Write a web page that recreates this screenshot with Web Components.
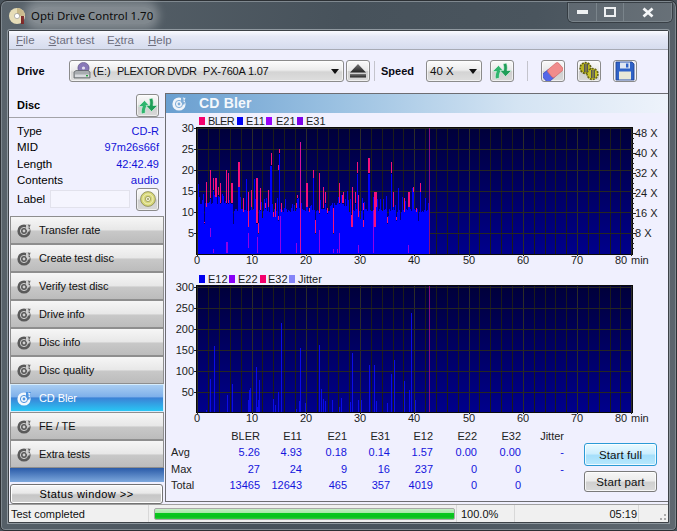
<!DOCTYPE html>
<html><head><meta charset="utf-8"><style>
html,body{margin:0;padding:0;background:#48525a;width:677px;height:531px;overflow:hidden}
body{font:11px "Liberation Sans",Arial,sans-serif;color:#000}
</style></head><body>
<odc-window>
  <odc-titlebar slot="title">Opti Drive Control 1.70</odc-titlebar>
  <odc-menubar slot="client"></odc-menubar>
  <odc-toolbar slot="client"></odc-toolbar>
  <odc-main slot="client">
    <odc-sidebar slot="side"></odc-sidebar>
    <odc-content slot="content"></odc-content>
  </odc-main>
  <odc-statusbar slot="client"></odc-statusbar>
</odc-window>
<script>
const FONT='"Liberation Sans",Arial,sans-serif';
const ICONS={
 refresh:`<svg width="20" height="18" viewBox="0 0 20 18"><path d="M3.500 17C3 14 3.500 11.500 4.500 9.500H.5L6.500 3.500 12 9.500H8.500C7.500 11.500 7 14 7.500 16z" fill="#2fb56e" stroke="#e8f8ee" stroke-width=".6"/><path d="M14.500 1C15.500 4 15.500 6.500 15 8.500H19.500L13.500 14.500 8 8.500H11.500C12 6.500 12 4 11 2z" fill="#1f9e58" stroke="#e8f8ee" stroke-width=".6"/></svg>`,
 eject:`<svg width="18" height="14" viewBox="0 0 18 14"><defs><linearGradient id="ej" x1="0" y1="0" x2="0" y2="1"><stop offset="0" stop-color="#777"/><stop offset="1" stop-color="#222"/></linearGradient></defs><path d="M9 0l8 8.500H1z" fill="url(#ej)"/><rect x="1" y="10" width="16" height="3.500" fill="url(#ej)"/></svg>`,
 eraser:`<svg width="20" height="19" viewBox="0 0 20 19"><g transform="rotate(-40 10 10)"><rect x="-1" y="5" width="10" height="10" rx="2" fill="#5468e8" stroke="#3040b8" stroke-width=".6"/><rect x="6" y="5" width="14" height="10" rx="2" fill="#f08c8c" stroke="#d06060" stroke-width=".6"/></g></svg>`,
 gears:`<svg width="22" height="20" viewBox="0 0 22 20"><circle cx="7.500" cy="7" r="5.400" fill="#b8b420" stroke="#5c5a10" stroke-width="1.600" stroke-dasharray="2 1"/><circle cx="14.500" cy="13" r="5.400" fill="#c8c428" stroke="#6a6812" stroke-width="1.600" stroke-dasharray="2 1"/><rect x="6" y="3" width="1.600" height="8" fill="#555"/><rect x="8.400" y="3" width="1.600" height="8" fill="#555"/><rect x="13" y="9" width="1.600" height="8" fill="#555"/><rect x="15.400" y="9" width="1.600" height="8" fill="#555"/></svg>`,
 floppy:`<svg width="20" height="20" viewBox="0 0 20 20"><path d="M1 1h16l2 2v16H1z" fill="#2f62c8" stroke="#1c3f90" stroke-width=".8"/><rect x="5" y="1.500" width="10" height="6" fill="#dfe6f2"/><rect x="11" y="2.500" width="2.400" height="4" fill="#2f62c8"/><rect x="4" y="10.500" width="12" height="8" fill="#e8e8d8"/></svg>`,
 disc:`<svg width="16" height="16" viewBox="0 0 16 16"><circle cx="8" cy="8" r="7.400" fill="#d8d878" stroke="#77774a" stroke-width=".7"/><circle cx="8" cy="8" r="5" fill="none" stroke="#eeeebc" stroke-width="1"/><circle cx="8" cy="8" r="2.600" fill="#f4f4d4" stroke="#88884e" stroke-width=".7"/><circle cx="8" cy="8" r="1" fill="#999966"/></svg>`,
 drive:`<svg width="18" height="18" viewBox="0 0 18 18"><circle cx="10.500" cy="6" r="5.600" fill="#8878b8" stroke="#54487c" stroke-width=".6"/><circle cx="10.500" cy="6" r="1.600" fill="#e4e0f0"/><path d="M1 10l2-1.500h12l2 1.500v6H1z" fill="#a8acb0" stroke="#55595d" stroke-width=".7"/><rect x="2" y="12.500" width="14" height="2.500" fill="#d8dade"/><rect x="13" y="13" width="2" height="1.400" fill="#28a040"/></svg>`,
 app:`<svg width="16" height="18" viewBox="0 0 16 18"><circle cx="8" cy="9" r="8" fill="#e6ddb8"/><path d="M8 1a8 8 0 0 1 8 8H8z" fill="#c8b888"/><circle cx="8" cy="9" r="2.600" fill="#fff" stroke="#888" stroke-width=".6"/><rect x="12" y="9" width="3" height="8" fill="#7a2020"/></svg>`
};
function navIcon(c,h){return `<svg width="15" height="15" viewBox="0 0 15 15"><circle cx="7" cy="8" r="6.600" fill="${c}"/><circle cx="7" cy="8" r="3.600" fill="none" stroke="${h}" stroke-width="1"/><circle cx="7" cy="8" r="1.400" fill="${h}"/><path d="M9 1l5 0-1 3-2 1 2 1.500-1 2.500-3-3z" fill="${h}"/><path d="M11 1.500l2.500 1-1.500 2z" fill="${c}"/></svg>`}
function def(name,fn){customElements.define(name,class extends HTMLElement{constructor(){super();this.attachShadow({mode:'open'});}connectedCallback(){if(!this._d){this._d=1;this.shadowRoot.innerHTML=fn(this);}}});}

def('odc-window',()=>`<style>
:host{display:block;width:677px;height:531px;box-sizing:border-box}
.w{box-sizing:border-box;width:677px;height:531px;padding:0 7px 7px;border:1px solid #2c3034;border-radius:7px 7px 5px 5px;
 margin:0;display:flex;flex-direction:column;box-shadow:inset 0 0 0 1px #7f888f;
 background:linear-gradient(100deg,#5a646c 0,#47525b 45%,#4a555e 70%,#5f6870 100%)}
.c{flex:none;height:493px;display:flex;flex-direction:column;border:1px solid #3d4247;border-radius:2px 2px 0 0;box-sizing:border-box;background:#f0f0fe;box-shadow:0 0 0 1px #8f989f}
</style><div class="w"><slot name="title"></slot><div class="c"><slot name="client"></slot></div></div>`);

def('odc-titlebar',()=>`<style>
:host{display:flex;height:29px;align-items:flex-start;flex:none}
.ico{margin:6px 0 0 1px;width:16px;height:18px}
.t{margin:6px 0 0 6px;font:11.4px "Noto Sans","Liberation Sans",sans-serif;line-height:17px;color:#0c0c0c;background:rgba(255,255,255,.27);border-radius:8px;box-shadow:0 0 9px 6px rgba(255,255,255,.27)}
.b{margin-left:auto;margin-right:-3px;margin-top:2px;display:flex;height:18px;border:1px solid #7a848b;border-top:none;border-radius:0 0 5px 5px;background:rgba(255,255,255,.1);box-shadow:0 0 0 1px rgba(30,34,38,.5)}
.b div{display:flex;align-items:center;justify-content:center;border-left:1px solid #7a848b}
.b div:first-child{border-left:none}
</style><div class="ico">${ICONS.app}</div><div class="t"><slot></slot></div>
<div class="b"><div style="width:27px"><svg width="11" height="5"><rect y="0" width="11" height="4" fill="#eef0f2"/></svg></div>
<div style="width:26px"><svg width="12" height="10"><rect x="1" y="1" width="10" height="8" fill="none" stroke="#eef0f2" stroke-width="2"/></svg></div>
<div style="width:47px"><svg width="12" height="11"><path d="M1.500 1.500l9 8M10.500 1.500l-9 8" stroke="#f4f6f8" stroke-width="2.800"/></svg></div></div>`);

def('odc-menubar',()=>`<style>
:host{display:flex;flex:none;height:18px;box-sizing:content-box;padding-left:7px;gap:14px;align-items:center;color:#6e6f7e;font:11.5px ${FONT};
 background:linear-gradient(#fafbff 0,#e6e9f6 30%,#d6dcee 100%);border-bottom:1px solid #a7aab4}
u{text-decoration:underline}
span:nth-child(3){margin-right:-1.5px}
</style><span><u>F</u>ile</span><span><u>S</u>tart test</span><span>E<u>x</u>tra</span><span><u>H</u>elp</span>`);

def('odc-tool',(h)=>`<style>
:host{display:flex;align-items:center;justify-content:center;box-sizing:border-box;width:${h.getAttribute('w')||24}px;height:${h.getAttribute('h')||22}px;border:1px solid #8b8b8b;border-radius:3px;background:linear-gradient(#fafafa,#e8e8e8 48%,#cfcfcf 52%,#d8d8d8);flex:none;box-shadow:inset 0 0 0 1px rgba(255,255,255,.6)}
</style><slot></slot>`);

def('odc-combo',(h)=>`<style>
:host{display:flex;align-items:center;box-sizing:border-box;height:22px;border:1px solid #8b8b8b;border-radius:3px;background:linear-gradient(#fcfcfc,#ececec 45%,#d4d4d4 55%,#dedede);flex:none;font:11.5px ${FONT};color:#111;box-shadow:inset 0 0 0 1px rgba(255,255,255,.6);padding-left:3px}
.a{margin-left:auto;margin-right:4px;width:0;height:0;border:4.5px solid transparent;border-top:5px solid #111;border-bottom:none}
</style><slot></slot><span class="a"></span>`);

def('odc-toolbar',()=>`<style>
:host{display:flex;flex:none;height:42px;align-items:center;padding-left:8px;box-sizing:border-box;background:#f0f0fe}
b{font:bold 11px ${FONT};color:#0a0a14}
.s{width:1px;height:20px;background:#c4c4cc;flex:none}
.d{display:flex;align-items:center;font-size:11px}
.d svg{margin-right:2px}
</style>
<b style="width:52px">Drive</b>
<odc-combo style="width:275px"><span class="d">${ICONS.drive}<span style="width:24px">(E:)</span><span style="width:86px;letter-spacing:-.5px">PLEXTOR DVDR</span><span style="letter-spacing:-.2px">PX-760A 1.07</span></span></odc-combo>
<odc-tool style="margin-left:2px">${ICONS.eject}</odc-tool>
<span class="s" style="margin-left:4px"></span>
<b style="margin-left:6px;width:45px">Speed</b>
<odc-combo style="width:56px;padding-left:3px">40 X</odc-combo>
<odc-tool style="margin-left:8px">${ICONS.refresh}</odc-tool>
<span class="s" style="margin-left:13px"></span>
<odc-tool style="margin-left:13px">${ICONS.eraser}</odc-tool>
<odc-tool style="margin-left:12px">${ICONS.gears}</odc-tool>
<odc-tool style="margin-left:12px;background:#e6e6f0">${ICONS.floppy}</odc-tool>`);

def('odc-main',()=>`<style>:host{display:flex;flex:none;height:412px}
.s{width:155px;flex:none;display:flex}.c{flex:1;display:flex;margin-left:1px;min-width:0}</style>
<div class="s"><slot name="side"></slot></div><div class="c"><slot name="content"></slot></div>`);

def('odc-nav',(h)=>{const a=h.hasAttribute('active');return `<style>
:host{display:flex;align-items:center;box-sizing:border-box;height:28px;flex:none;border:1px solid ${a?'#d6ecfb':'#8e8e8e'};font:11px ${FONT};letter-spacing:-.1px;
 color:${a?'#fff':'#111'};padding-left:6px;
 background:${a?'linear-gradient(#a9cdf2 0,#7eb0ea 45%,#3b82d6 50%,#29c6f4 100%)':'linear-gradient(#f6f6f6 0,#e8e8e8 48%,#c8c8c8 55%,#bcbcbc 100%)'}}
.i{width:15px;height:15px;margin-right:7px;display:block;flex:none}
</style><span class="i">${a?navIcon('#f4f8fc','#4f94e0'):navIcon('#5a5a5a','#cfcfcf')}</span><slot></slot>`});

def('odc-sidebar',()=>`<style>
:host{display:flex;flex-direction:column;width:155px;height:412px;font:11.5px ${FONT}}
.hd{display:flex;height:26px;box-sizing:border-box;align-items:flex-start;padding:2px 5px 0 8px;border-bottom:1px solid #a3a3a8;flex:none}
.hd b{font:bold 11px ${FONT};margin-top:5px;flex:1}
.rows{display:grid;grid-template-columns:auto 1fr;grid-auto-rows:16.3px;padding:5px 5px 0 8px;align-items:center;flex:none;box-sizing:border-box;height:70px}
.rows span:nth-child(even){text-align:right;color:#1212d8;font-size:11px}
.lab{display:flex;align-items:center;padding:0 5px 0 8px;height:24px;flex:none;box-sizing:border-box;margin-top:-1px}
.in{width:80px;height:18px;box-sizing:border-box;border:1px solid #e2e2ec;background:#f5f5fe;margin:0 6px 0 auto}
.nav{display:flex;flex-direction:column;width:154px;margin-left:1px;flex:none}
.fill{height:14px;flex:none;background:linear-gradient(#2a5ba8,#7da8dc);margin-left:1px}
.st{margin:2px 1px 0 1px;height:20px;box-sizing:border-box;border:1px solid #737373;border-radius:3px;background:linear-gradient(#f8f8f8,#e8e8e8 45%,#c6c6c6 55%,#d0d0d0);text-align:center;font:11px/18px ${FONT};letter-spacing:.45px;box-shadow:inset 0 0 0 1px #fff;flex:none}
.top{height:124px;flex:none;background:#f0f0fe}
</style>
<div class="top"><div class="hd"><b>Disc</b><odc-tool w="23" h="23">${ICONS.refresh}</odc-tool></div>
<div class="rows"><span>Type</span><span>CD-R</span><span>MID</span><span>97m26s66f</span><span>Length</span><span>42:42.49</span><span>Contents</span><span style="font-size:11.5px">audio</span></div>
<div class="lab"><span>Label</span><span class="in"></span><odc-tool w="23" h="23">${ICONS.disc}</odc-tool></div></div>
<div class="nav"><odc-nav>Transfer rate</odc-nav><odc-nav>Create test disc</odc-nav><odc-nav>Verify test disc</odc-nav><odc-nav>Drive info</odc-nav><odc-nav>Disc info</odc-nav><odc-nav>Disc quality</odc-nav><odc-nav active>CD Bler</odc-nav><odc-nav>FE / TE</odc-nav><odc-nav>Extra tests</odc-nav></div>
<div class="fill"></div><div class="st">Status window &gt;&gt;</div>`);

function rng(seed){return()=>{seed=(seed*1664525+1013904223)>>>0;return seed/4294967296}}
function chart1(){
 const Y0=254,U=4.2;let s='';
 const r=rng(777);const h=[];
 for(let x=198;x<429;x++){
  const high=(x<233)||(x>=330&&x<347);
  const b=high?11.5:10;
  const q=r();
  let v=q<.05?7+r()*2:q<.72?b+r()*.8:b+.8+r()*3;
  h[x]=v;
 }
 const P=[];
 [[42,335,340],[48,215,290],[61,180,265],[68,205,240],[75,205,260,2],[85,230,255],[90,220,280],[108,180,280],[115,190,280],[122,220,280,2],[145,155,230,2],[160,265,305],[175,245,350],[182,240,290],[198,205,340,2],[205,340,370],[210,235,300],[225,280,295],[235,240,290],[242,130,165],[248,305,320],[255,280,320],[265,165,180],[272,280,305],[264,318,330],[268,118,130],[322,255,265],[318,280,295],[348,220,290,2],[358,295,305],[370,180,205],[386,205,300]].forEach(p=>P.push([190+p[0]/3,p[3]||1,p[1],p[2]]));
 [[10,180,205],[28,190,310],[16,330,370],[40,232,295],[44,245,280],[52,295,310],[68,295,370],[88,218,280],[95,255,280],[100,245,280],[122,315,350,2],[127,230,340],[136,245,280],[142,155,190],[145,255,320],[160,280,300],[158,330,350],[175,145,190,2],[193,245,350,2],[199,245,290],[232,320,340],[243,155,190],[250,245,290],[258,320,330],[282,265,305],[295,245,290,2],[310,232,245],[317,295,305],[331,220,245]].forEach(p=>P.push([310+p[0]/3,p[3]||1,p[1],p[2]]));
 P.forEach(p=>{const x=Math.round(p[0]);for(let k=0;k<p[1];k++){const bv=(430-p[3])/12.6;h[x+k]=Math.max(bv,1);}});
 [[25,220],[40,250],[88,258],[100,255],[168,205],[192,205],[240,165],[268,130],[370,180]].forEach(p=>{const x=Math.round(190+p[0]/3);h[x]=Math.max(h[x]||0,(430-p[1])/12.6)});
 [[10,205],[142,190],[175,190],[243,190],[265,232],[305,232],[331,245],[110,240],[210,265],[228,255]].forEach(p=>{const x=Math.round(310+p[0]/3);h[x]=Math.max(h[x]||0,(430-p[1])/12.6)});
 for(let x=198;x<429;x++){s+=`<rect x="${x}" y="${Y0-h[x]*U}" width="1" height="${h[x]*U}" fill="#0000ff"/>`;}
 P.forEach(p=>{const x=Math.round(p[0]),y=110+p[2]/3,b=110+p[3]/3;s+=`<rect x="${x}" y="${y}" width="${p[1]}" height="${b-y}" fill="#f4107c"/>`;});
 const V=[[190+61/3,355,380],[190+68/3,418,430],[190+108/3,395,430,2],[190+175/3,370,415],[190+200/3,380,430],[190+270/3,318,430],[190+318/3,398,430],[190+331/3,95,430],[310+28/3,360,430],[310+70/3,418,430],[310+82/3,418,430],[310+88/3,370,430],[310+145/3,405,430],[310+190/3,300,430],[310+295/3,405,430]];
 V.forEach(p=>{const x=Math.round(p[0]),y=110+p[1]/3,b=110+p[2]/3;const isTall=Math.abs(p[0]-(190+331/3))<1;s+=`<rect x="${x}" y="${y}" width="${p[3]||1}" height="${b-y}" fill="${isTall?'#d8109c':'#9000e8'}"/>`;});
 return s;
}
function chart2(){
 let s='';const Y=411;
 [[124,420],[136,328],[148,228],[187,375],[200,370],[202,342],[248,390],[251,360],[255,355],[274,292],[277,410],[283,330],[280,390],[325,388],[331,405],[340,365],[347,285],[349,160],[394,418],[403,393],[406,235],[421,400],[463,225],[469,358],[475,388],[481,393],[502,390],[523,412],[529,384],[556,395],[562,250],[580,390],[589,390],[613,285],[627,378],[628,285],[634,393],[667,400],[679,312],[688,270],[718,333],[733,360],[739,130],[750,390]].forEach(p=>{
  const x=Math.round(165+p[0]/3),y=270+p[1]/3;s+=`<rect x="${x}" y="${y}" width="1" height="${Y-y+1}" fill="#0c0ce8"/>`});
 return s;
}
def('odc-chart',(h)=>{
 const two=h.getAttribute('kind')==='2';
 const T=two?286:128,B=two?412:254,L=197,R=632,top=two?270:113,hh=two?158:157;
 let g='',t='';
 for(let i=0;i<=40;i++){const xx=Math.round(L+.3+i*10.85);
   g+=`<rect x="${xx}" y="${T}" width="1" height="${B-T}" fill="${i%5==0?'#2c2c28':'#1c1c1a'}"/>`;
   if(i%5==0){t+=`<text x="${i==40?621:xx}" y="${two?422:264}" text-anchor="middle">${i*2}</text><rect x="${xx}" y="${B}" width="1" height="2" fill="#222"/>`;}}
 t+=`<text x="631" y="${two?422:264}">min</text>`;
 const ys=two?[300,250,200,150,100,50]:[30,25,20,15,10,5];
 ys.forEach(v=>{const y=two?Math.round(412.6-v*.4176):Math.round(254.3-v*4.2);
   g+=`<rect x="${L}" y="${y}" width="${R-L}" height="1" fill="#262622"/><rect x="${L-3}" y="${y}" width="3" height="1" fill="#222"/>`;
   t+=`<text x="194" y="${y+4}" text-anchor="end">${v}</text>`;});
 if(!two)['48 X','40 X','32 X','24 X','16 X','8 X'].forEach((l,i)=>{const y=133+i*20;t+=`<rect x="${R}" y="${y}" width="4" height="1" fill="#222"/><text x="635" y="${y+4}">${l}</text>`;for(let k=1;k<4;k++)t+=`<rect x="${R}" y="${y+k*5}" width="2" height="1" fill="#222"/>`;});
 const leg=two?[[199,'#0000f0',208,'E12'],[229,'#8800f8',238,'E22'],[260,'#f4006c',268,'E32'],[289,'#8484f8',298,'Jitter']]:[[199,'#f4006c',208,'BLER'],[237,'#0000f0',246,'E11'],[266,'#9800f8',276,'E21'],[297,'#7a00e8',306,'E31']];
 const ly=two?275:117;
 leg.forEach(l=>{t+=`<rect x="${l[0]}" y="${ly}" width="6" height="8" fill="${l[1]}"/><text x="${l[2]}" y="${ly+8}"${l[3]=='BLER'?' letter-spacing="-.7"':''}>${l[3]}</text>`;});
 const id=two?'b':'a';
 return `<style>:host{display:block;height:${hh}px;flex:none}svg{display:block}text{font:11px ${FONT};fill:#1c1c1c}rect{shape-rendering:crispEdges}</style>
 <svg width="500" height="${hh}" viewBox="166 ${top} 500 ${hh}"><defs><linearGradient id="${id}" x1="0" y1="0" x2="0" y2="1"><stop offset="0" stop-color="#00003a"/><stop offset="1" stop-color="#00008c"/></linearGradient></defs>
 <rect x="${L}" y="${T}" width="${R-L}" height="${B-T}" fill="url(#${id})"/>${g}${two?chart2():chart1()}
 <rect x="429" y="${T}" width="1" height="${B-T}" fill="#84107c"/>
 <rect x="${L-1}" y="${T-1}" width="${R-L+2}" height="1" fill="#0a0a0a"/><rect x="${L-1}" y="${T}" width="1" height="${B-T+1}" fill="#0a0a0a"/><rect x="${R}" y="${T}" width="1" height="${B-T+1}" fill="#0a0a0a"/><rect x="${L-1}" y="${B}" width="${R-L+2}" height="1" fill="#0a0a0a"/>${t}</svg>`});

def('odc-stats',()=>{
 const rows=[['','BLER','E11','E21','E31','E12','E22','E32','Jitter'],['Avg','5.26','4.93','0.18','0.14','1.57','0.00','0.00','-'],['Max','27','24','9','16','237','0','0','-'],['Total','13465','12643','465','357','4019','0','0','']];
 let c='';rows.forEach((r,i)=>r.forEach((v,j)=>{c+=`<span class="${i==0||j==0?'h':'v'}${j==0?' l':''}">${v}</span>`}));
 return `<style>:host{display:block;flex:none}
 .g{display:grid;grid-template-columns:40px 49px 42px 45px 43px 43px 44px 44px 43px;grid-auto-rows:16.3px;padding:0 0 0 5px;align-items:center;font:11px ${FONT}}
 span{text-align:right}.l{text-align:left}.h{color:#222}.v{color:#1414dc}</style><div class="g">${c}</div>`});

def('odc-btn',(h)=>{const p=h.hasAttribute('primary');return `<style>
:host{display:flex;align-items:center;justify-content:center;box-sizing:border-box;width:73px;height:${p?23:21}px;border-radius:3px;font:11.5px ${FONT};letter-spacing:.1px;color:#111;
 border:1px solid ${p?'#2a9ad6':'#7a7a7a'};background:${p?'linear-gradient(#eafaff,#cdeefe 45%,#a5dffb 55%,#b8e8fd)':'linear-gradient(#f6f6f6,#ececec 45%,#d0d0d0 55%,#dadada)'};box-shadow:inset 0 0 0 1px rgba(255,255,255,.75)}
</style><slot></slot>`});

def('odc-content',()=>`<style>
:host{display:flex;flex-direction:column;flex:1;box-sizing:border-box;height:409px;margin-top:1px;border:1px solid #6d6d72;border-width:1px 0 1px 1px;background:#f0f0fe;font:12px ${FONT}}
.h{height:19px;box-sizing:border-box;padding-bottom:1px;flex:none;display:flex;align-items:center;padding-left:6px;background:linear-gradient(90deg,#6a9fd0 0,#9cc2e2 35%,#d4e4f3 70%,#eef3fb 100%)}
.h b{font:bold 14px ${FONT};color:#f4f8fc;margin-left:12px;letter-spacing:.2px}
.b{display:flex;justify-content:space-between;padding-right:11px;flex:none;min-height:0}
.bt{display:flex;flex-direction:column;gap:5px;padding-top:15px}
</style><div class="h">${navIcon('#f0f4fa','#7fadd8')}<b>CD Bler</b></div>
<odc-chart kind="1"></odc-chart><odc-chart kind="2"></odc-chart>
<div class="b"><odc-stats></odc-stats><div class="bt"><odc-btn primary>Start full</odc-btn><odc-btn>Start part</odc-btn></div></div>`);

def('odc-statusbar',()=>`<style>
:host{display:flex;flex:none;height:18px;align-items:center;background:#f0f0f0;border-top:1px solid #a0a0a0;font:11px ${FONT};color:#111;box-sizing:border-box}
.s{width:1px;height:100%;background:#d8d8d8;flex:none}
.p{width:301px;height:12px;box-sizing:border-box;border:1px solid #a8a8a8;border-radius:2px;background:linear-gradient(#c4f0c4 0,#aae8aa 35%,#08c81e 45%,#08c01c 80%,#30d040 100%);margin:0 1px 0 5px;flex:none}
</style><span style="width:139px;padding-left:2px;box-sizing:border-box;flex:none">Test completed</span><span class="s"></span>
<span class="p"></span><span class="s"></span><span style="width:57px;padding-left:4px;box-sizing:border-box;flex:none">100.0%</span><span class="s"></span>
<span style="width:122px;text-align:right;flex:none">05:19</span><span class="s" style="margin-left:1px"></span>
<svg width="28" height="16" style="flex:none"><g fill="#aaa"><rect x="21" y="12" width="2" height="2"/><rect x="25" y="12" width="2" height="2"/><rect x="25" y="8" width="2" height="2"/></g></svg>`);
</script>
</body></html>
